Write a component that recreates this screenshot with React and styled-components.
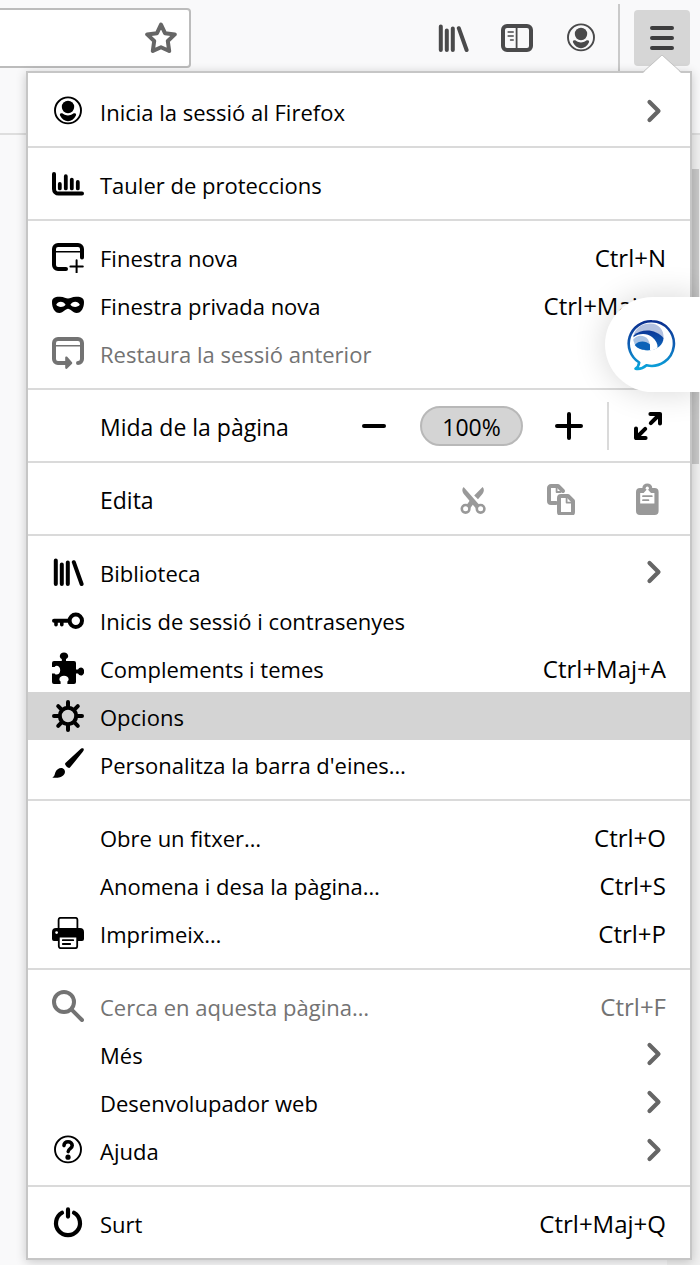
import styled, { createGlobalStyle } from 'styled-components';

const GlobalStyle = createGlobalStyle`
    * {
        box-sizing: border-box;
    }
    body {
        margin: 0;
        background: #f9f9fa;
        font-family: "Open Sans", "Noto Sans", sans-serif;
        font-size: 22px;
        line-height: 32px;
        color: #000;
    }
    button, input {
        font: inherit;
        color: inherit;
    }
`

// stroke icons share this
const Line = ({ d, w = 2 }) => (
    <path d={d} fill="none" stroke="currentColor" strokeWidth={w} strokeLinecap="round" strokeLinejoin="round" />
)

const ICONS = {
    account: <>
        <circle cx="8" cy="7.700" r="6.500" fill="none" stroke="currentColor" strokeWidth=".95" />
        <circle cx="8" cy="6" r="3.100" />
        <path d="M4.700 9.100c1 0 1.300 1.100 3.300 1.100s2.300-1.100 3.300-1.100c.8 0 .9.700.6 1.300C11.100 12.100 9.600 13.100 8 13.100s-3.100-1-3.900-2.700c-.3-.6-.2-1.300.6-1.300z" />
    </>,
    dashboard: <>
        <Line d="M1 3v7.500a2.300 2.300 0 0 0 2.300 2.300H15" />
        <Line d="M3.900 8v2.200M6.900 4.100v6.100M9.900 5.800v4.400M12.900 7v3.200" w={1.9} />
    </>,
    newWindow: <>
        <Line d="M7 14H3a2 2 0 0 1-2-2V4a2 2 0 0 1 2-2h10a2 2 0 0 1 2 2v4.200" />
        <Line d="M1.500 5.400h13" w={0.8} />
        <Line d="M12.300 9.600v6.200M9.200 12.700h6.200" w={1} />
    </>,
    mask: <path
        fillRule="evenodd"
        d="M0 6.500C0 4.500 1.500 3.800 4 3.900c2 .1 3 .9 4 .9s2-.8 4-.9c2.500-.1 4 .6 4 2.600 0 3-1.300 5.500-3.700 5.500-2 0-3-2.100-4.300-2.100S5.700 12 3.700 12C1.300 12 0 9.500 0 6.500zM2.100 7.900c1 1.400 3.500 1.500 4.700 0-1-2-3.900-2-4.700 0zM13.900 7.900c-1 1.400-3.500 1.500-4.700 0 1-2 3.900-2 4.700 0z"
    />,
    restore: <>
        <Line d="M13 13a2 2 0 0 0 2-2V3a2 2 0 0 0-2-2H3a2 2 0 0 0-2 2v8a2 2 0 0 0 2 2h4.500" />
        <Line d="M1.500 4.400h13" w={0.8} />
        <path d="M6.600 10.300c0-.6.6-.8 1-.4l2.300 2.600c.3.300.3.700 0 1l-2.300 2.300c-.4.400-1 .2-1-.4z" />
    </>,
    library: <Line d="M1.900 2.200V14M4.900 4.200V14M7.900 3.200V14M10.900 3.100L14.800 14" w={2} />,
    key: <>
        <circle cx="11.900" cy="8.400" r="3.100" fill="none" stroke="currentColor" strokeWidth="2" />
        <Line d="M1 8.400h7.500" />
        <Line d="M2 8.500v1.900M4.900 8.500v1.900" w={1.800} />
    </>,
    puzzle: <path d="M4.900 4.500V3.500C4.200 3.200 3.900 2.700 3.900 2 3.900 1 4.800.2 6 .2S8.100 1 8.100 2c0 .7-.4 1.200-1.100 1.500v1h4a1 1 0 0 1 1 1v3.300h1c.3-.6.900-1 1.500-1 .9 0 1.600.9 1.600 2s-.7 2-1.600 2c-.6 0-1.200-.4-1.500-1h-1V15a1 1 0 0 1-1 1H7.700v-1.300c.4-.3.6-.6.6-1.100 0-1-1-1.700-2.300-1.700s-2.300.7-2.300 1.700c0 .5.200.8.6 1.100V16H1a1 1 0 0 1-1-1v-4.300h1.300c.3.400.6.600 1 .6 1 0 1.800-.9 1.800-2.200s-.8-2.200-1.800-2.200c-.4 0-.7.200-1 .6H0V5.500a1 1 0 0 1 1-1z" />,
    gear: <>
        <circle cx="8" cy="8" r="4.100" fill="none" stroke="currentColor" strokeWidth="2" />
        <Line d="M8 1v2.500M8 12.500V15M1 8h2.500M12.500 8H15M3.100 3.100l1.700 1.700M11.200 11.200l1.700 1.700M12.900 3.100l-1.700 1.700M4.800 11.200l-1.700 1.700" />
    </>,
    brush: <>
        <path d="M15.700.2C15 0 14.500.3 14 .8L6.700 7.500c-.8.8 1.500 3.100 2.300 2.300L15.300 2c.6-.7.800-1.300.4-1.800z" />
        <path d="M6.200 10.900c.9 1.500-.4 3.300-2.200 3.700-1.400.4-2.700.4-4 .2 1.400-.6 1.300-1.600 1.700-2.700.7-2 3.500-2.900 4.500-1.200z" />
    </>,
    print: <>
        <path d="M3.300 6V1.400a1 1 0 0 1 1-1h7.400a1 1 0 0 1 1 1V6" fill="none" stroke="currentColor" strokeWidth=".9" />
        <path fillRule="evenodd" d="M2 5.500h12a2 2 0 0 1 2 2V11a1 1 0 0 1-1 1H1a1 1 0 0 1-1-1V7.500a2 2 0 0 1 2-2zM2.300 7.100a.7.700 0 1 0 0 1.400.7.700 0 0 0 0-1.400z" />
        <path d="M3.400 9.800h9.200v4.800a1 1 0 0 1-1 1H4.400a1 1 0 0 1-1-1z" fill="#fff" stroke="currentColor" strokeWidth=".9" />
        <Line d="M5.400 11.600h5.200M5.400 13.500h3.700" w={0.9} />
    </>,
    search: <>
        <circle cx="6" cy="6" r="5" fill="none" stroke="currentColor" strokeWidth="2" />
        <Line d="M9.800 9.800L15 15" />
    </>,
    help: <>
        <circle cx="8" cy="7.700" r="6.500" fill="none" stroke="currentColor" strokeWidth=".95" />
        <Line d="M6 5.800c0-1.200.8-1.900 2-1.900s2.100.7 2.100 1.900c0 1.500-2 1.500-2 3" w={1.800} />
        <circle cx="8" cy="11.600" r="1.300" />
    </>,
    power: <Line d="M5 2.900a6 6 0 1 0 6 0M8 1.200v3.600" w={2.100} />,
    sidebar: <>
        <rect x="1" y="2" width="14" height="12" rx="2" fill="none" stroke="currentColor" strokeWidth="2" />
        <Line d="M7.800 2.500v11" w={0.9} />
        <Line d="M3.600 5h2.500M3.600 7h2.500M4.800 9h1.300" w={0.8} />
    </>,
    star: <Line d="M8 1.300l2 4.300 4.900.6-3.500 3.300.7 5L8 12.600l-4.100 1.900.7-5L1.100 6.200 6 5.600z" />,
    menu: <Line d="M3 3h10M3 8h10M3 13h10" />,
    minus: <Line d="M3 8h10" />,
    plus: <Line d="M2 8h12M8 2v12" />,
    fullscreen: <>
        <Line d="M9.200 2H14v4.800M14 2L9.400 6.600M6.800 14H2V9.200M2 14l4.600-4.600" />
    </>,
    cut: <>
        <circle cx="3.800" cy="12.900" r="1.900" fill="none" stroke="currentColor" strokeWidth="1.300" />
        <circle cx="11.300" cy="12.900" r="1.900" fill="none" stroke="currentColor" strokeWidth="1.300" />
        <path d="M2.800 2c-.9 1-.8 2.300 0 3.400l6.200 7.300 1.600-1.800z" />
        <path d="M12.300 2c.9 1 .8 2.300 0 3.400L10 8.100 8.100 6.300zM6 8.600l1.700 1.900-1.700 2.200-1.600-1.800z" />
    </>,
    copy: <>
        <Line d="M5.500 10H3a1 1 0 0 1-1-1V2.500a1 1 0 0 1 1-1h3.500L9 4" />
        <Line d="M8 6.500h3.500L14 9v5.500a1 1 0 0 1-1 1H8a1 1 0 0 1-1-1v-7a1 1 0 0 1 1-1z" />
        <Line d="M5.800 2v2.500h2M10.800 7v2.800h2.800" w={0.9} />
    </>,
    paste: <>
        <path d="M4 2.500h7.300a2 2 0 0 1 2 2V14a2 2 0 0 1-2 2H4a2 2 0 0 1-2-2V4.500a2 2 0 0 1 2-2z" />
        <circle cx="7.650" cy="2.700" r="2.500" />
        <path d="M4.100 5h1.700l1.850-2 1.850 2h1.700v5.300H4.100z" fill="#fff" />
        <circle cx="7.650" cy="2.600" r=".8" fill="#fff" />
        <Line d="M5.500 6.600h4.400M5.500 8.600h2.700" w={0.9} />
    </>,
    chevron: <Line d="M5 2l6 6-6 6" w={2.800} />,
}

const Icon = ({ name, size = 32 }) => (
    <IconSvg viewBox="0 0 16 16" width={size} height={size} fill="currentColor" aria-hidden="true">
        {ICONS[name]}
    </IconSvg>
)

const MenuItem = ({ icon, label, shortcut, submenu, disabled, active }) => (
    <Item disabled={disabled} $active={active}>
        <IconSlot>{icon && <Icon name={icon} />}</IconSlot>
        <Label>{label}</Label>
        {shortcut && <Shortcut>{shortcut}</Shortcut>}
        {submenu && <Arrow><Icon name="chevron" size={24} /></Arrow>}
    </Item>
)

const ChatLogo = () => (
    <svg viewBox="0 0 50 54" width="50" height="54" aria-hidden="true">
        <defs>
            <linearGradient id="bubble" x1="0" y1="0" x2="0" y2="1">
                <stop offset="0" stopColor="#0b2f8f" />
                <stop offset=".5" stopColor="#0f5fb4" />
                <stop offset="1" stopColor="#0aa5dc" />
            </linearGradient>
            <linearGradient id="wave" x1="0" y1="0" x2="0" y2="1">
                <stop offset="0" stopColor="#0a3697" />
                <stop offset="1" stopColor="#0c6cc0" />
            </linearGradient>
        </defs>
        <path
            d="M25 3.300a22.300 22.300 0 1 1-5.500 44c-3 2.700-6.500 4.200-11 3.400 2.300-1.200 3.200-3 3.700-6.200A22.300 22.300 0 0 1 25 3.300z"
            fill="#fff" stroke="url(#bubble)" strokeWidth="2.600" strokeLinejoin="round"
        />
        <path d="M6.500 17.500C9 9 16 5.500 23 5.500c8.500 0 14.500 6 13.500 15.500C29 13 16 11 6.500 17.500z" fill="#b3c1e0" />
        <path d="M6.500 17.500C15 10 29 11 36.500 20c0 6.500-6 11.500-13.500 12.300-8 .7-15-3-16.500-10z" fill="url(#wave)" />
        <path d="M6 19.500c6-4.500 14-4.500 19-.5 4 3.200 6 7 5.500 11-2.500 1.600-5 2.300-7.500 2.300C14 32.500 6 28 6 19.500z" fill="#fff" />
        <path d="M6.500 21.500c3-5 11-5 14.500 0 2 3 2.300 7 2 10.500-8 .3-16-3-16.500-10.500z" fill="#a9c3e4" />
        <path d="M7.700 27c3.800-4.500 11-4.500 15.300-.5V32c-6 .5-12-.5-15.300-5z" fill="#0b62b8" />
    </svg>
)

const App = () => {
    return (
        <Page>
            <GlobalStyle />
            <Toolbar>
                <UrlBox>
                    <UrlInput type="text" aria-label="Adreça" />
                    <IconButton aria-label="Afegeix a les adreces d'interès"><Icon name="star" /></IconButton>
                </UrlBox>
                <Tools>
                    <IconButton aria-label="Biblioteca"><Icon name="library" /></IconButton>
                    <IconButton aria-label="Barra lateral"><Icon name="sidebar" /></IconButton>
                    <IconButton aria-label="Compte"><Icon name="account" /></IconButton>
                </Tools>
                <ToolbarDivider />
                <MenuButton aria-label="Menú"><Icon name="menu" /></MenuButton>
            </Toolbar>

            <Viewport>
                <ScrollTrack><ScrollThumb /></ScrollTrack>
            </Viewport>

            <Menu>
                <Notch viewBox="0 0 38 18" width="38" height="18" aria-hidden="true">
                    <path d="M0 18L19 0l19 18z" fill="#fff" />
                    <path d="M0 17L19 0l19 17" fill="none" stroke="#c4c4c4" strokeWidth="1" />
                </Notch>

                <Section>
                    <MenuItem icon="account" label="Inicia la sessió al Firefox" submenu />
                </Section>
                <Section>
                    <MenuItem icon="dashboard" label="Tauler de proteccions" />
                </Section>
                <Section>
                    <MenuItem icon="newWindow" label="Finestra nova" shortcut="Ctrl+N" />
                    <MenuItem icon="mask" label="Finestra privada nova" shortcut="Ctrl+Maj+P" />
                    <MenuItem icon="restore" label="Restaura la sessió anterior" disabled />
                </Section>

                {/* zoom */}
                <Section>
                    <Controls>
                        <Label>Mida de la pàgina</Label>
                        <ZoomGroup>
                            <ControlButton $wide aria-label="Redueix"><Icon name="minus" /></ControlButton>
                            <ZoomLevel>100%</ZoomLevel>
                            <ControlButton $wide aria-label="Amplia"><Icon name="plus" /></ControlButton>
                        </ZoomGroup>
                        <ControlDivider />
                        <ControlButton aria-label="Pantalla completa"><Icon name="fullscreen" /></ControlButton>
                    </Controls>
                </Section>

                {/* edit */}
                <Section>
                    <Controls>
                        <Label>Edita</Label>
                        <EditGroup>
                            <ControlButton disabled aria-label="Retalla"><Icon name="cut" /></ControlButton>
                            <ControlButton disabled aria-label="Copia"><Icon name="copy" /></ControlButton>
                            <ControlButton disabled aria-label="Enganxa"><Icon name="paste" /></ControlButton>
                        </EditGroup>
                    </Controls>
                </Section>

                <Section>
                    <MenuItem icon="library" label="Biblioteca" submenu />
                    <MenuItem icon="key" label="Inicis de sessió i contrasenyes" />
                    <MenuItem icon="puzzle" label="Complements i temes" shortcut="Ctrl+Maj+A" />
                    <MenuItem icon="gear" label="Opcions" active />
                    <MenuItem icon="brush" label="Personalitza la barra d'eines…" />
                </Section>
                <Section>
                    <MenuItem label="Obre un fitxer…" shortcut="Ctrl+O" />
                    <MenuItem label="Anomena i desa la pàgina…" shortcut="Ctrl+S" />
                    <MenuItem icon="print" label="Imprimeix…" shortcut="Ctrl+P" />
                </Section>
                <Section>
                    <MenuItem icon="search" label="Cerca en aquesta pàgina…" shortcut="Ctrl+F" disabled />
                    <MenuItem label="Més" submenu />
                    <MenuItem label="Desenvolupador web" submenu />
                    <MenuItem icon="help" label="Ajuda" submenu />
                </Section>
                <Section>
                    <MenuItem icon="power" label="Surt" shortcut="Ctrl+Maj+Q" />
                </Section>
            </Menu>

            <ChatTab aria-label="Xat"><ChatLogo /></ChatTab>
        </Page>
    )
}
export default App;

const Page = styled.div`
    position: relative;
    display: flex;
    flex-direction: column;
    min-height: 100vh;
    overflow: hidden;
`

const IconSvg = styled.svg`
    display: block;
    flex: none;
`

// toolbar
const Toolbar = styled.header`
    display: flex;
    align-items: flex-start;
    height: 135px;
    padding: 8px 10px 0 0;
    border-bottom: 2px solid #dedede;
    color: #4a4a4b;
`
const UrlBox = styled.div`
    display: flex;
    align-items: center;
    width: 191px;
    height: 60px;
    margin-right: auto;
    padding-right: 12px;
    background: #fff;
    border: 2px solid #bcbcbc;
    border-left: 0;
    border-radius: 0 4px 4px 0;
    color: #666;
`
const UrlInput = styled.input`
    flex: 1;
    min-width: 0;
    border: 0;
    outline: 0;
    background: transparent;
`
const IconButton = styled.button`
    padding: 0;
    border: 0;
    background: transparent;
    color: inherit;
`
const Tools = styled.div`
    display: flex;
    gap: 32px;
    padding: 14px 21px 0 0;
`
const ToolbarDivider = styled.div`
    width: 2px;
    height: 68px;
    margin: -4px 14px 0 0;
    background: #cacaca;
`
const MenuButton = styled.button`
    display: flex;
    align-items: center;
    justify-content: center;
    width: 56px;
    height: 56px;
    margin-top: 2px;
    padding: 0;
    border: 0;
    border-radius: 4px;
    background: #d6d6d6;
    color: #3d3d3e;
`

// page behind the menu
const Viewport = styled.main`
    display: flex;
    flex: 1;
    justify-content: flex-end;
`
const ScrollTrack = styled.div`
    width: 33px;
    padding: 34px 1px 0;
    background: #f0f0f0;
`
const ScrollThumb = styled.div`
    height: 295px;
    background: #c8c8c8;
`

// menu
const Menu = styled.nav`
    position: absolute;
    top: 71px;
    left: 26px;
    right: 8px;
    padding-top: 2px;
    background: #fff;
    border: 2px solid #c6c6c6;
    box-shadow: 0 2px 10px rgba(0, 0, 0, 0.2);
`
const Notch = styled.svg`
    position: absolute;
    top: -18px;
    right: 9px;
`
const Section = styled.div`
    padding: 12px 0 11px;
    border-bottom: 2px solid #dadada;

    &:last-child {
        border-bottom: 0;
    }
`
const Item = styled.button`
    display: flex;
    align-items: center;
    width: 100%;
    height: 48px;
    padding: 0 24px;
    border: 0;
    text-align: left;
    background: ${({ $active }) => ($active ? '#d4d4d4' : 'transparent')};

    &:disabled {
        color: #737373;
    }
`
const IconSlot = styled.span`
    width: 32px;
    margin-right: 16px;
`
const Label = styled.span`
    flex: 1;
    padding-top: 2px;
    white-space: nowrap;
`
const Shortcut = styled.span`
    padding-top: 2px;
    font-size: 24px;
`
const Arrow = styled.span`
    color: #666;
`
const Controls = styled.div`
    display: flex;
    align-items: center;
    height: 48px;
    padding: 0 24px 0 72px;
    font-size: 23px;
`
const ZoomGroup = styled.div`
    display: flex;
    align-items: center;
    gap: 22px;
    margin-right: 14px;
`
const EditGroup = styled.div`
    display: flex;
    gap: 51px;
`
const ControlButton = styled.button`
    display: flex;
    align-items: center;
    justify-content: center;
    width: ${({ $wide }) => ($wide ? '48px' : '36px')};
    height: 40px;
    padding: 0;
    border: 0;
    background: transparent;

    &:disabled {
        color: #999;
    }
`
const ZoomLevel = styled.button`
    width: 103px;
    height: 40px;
    padding: 2px 0 0;
    border: 2px solid #b8b8b8;
    border-radius: 20px;
    background: #d4d4d4;
`
const ControlDivider = styled.div`
    width: 2px;
    height: 48px;
    margin-right: 21px;
    background: #dadada;
`

// floating chat tab
const ChatTab = styled.button`
    position: absolute;
    top: 297px;
    right: 0;
    display: flex;
    align-items: center;
    width: 95px;
    height: 95px;
    padding: 0 0 0 22px;
    border: 0;
    border-radius: 48px 0 0 48px;
    background: #fff;
    box-shadow: 0 0 32px rgba(0, 0, 0, 0.16);
`
